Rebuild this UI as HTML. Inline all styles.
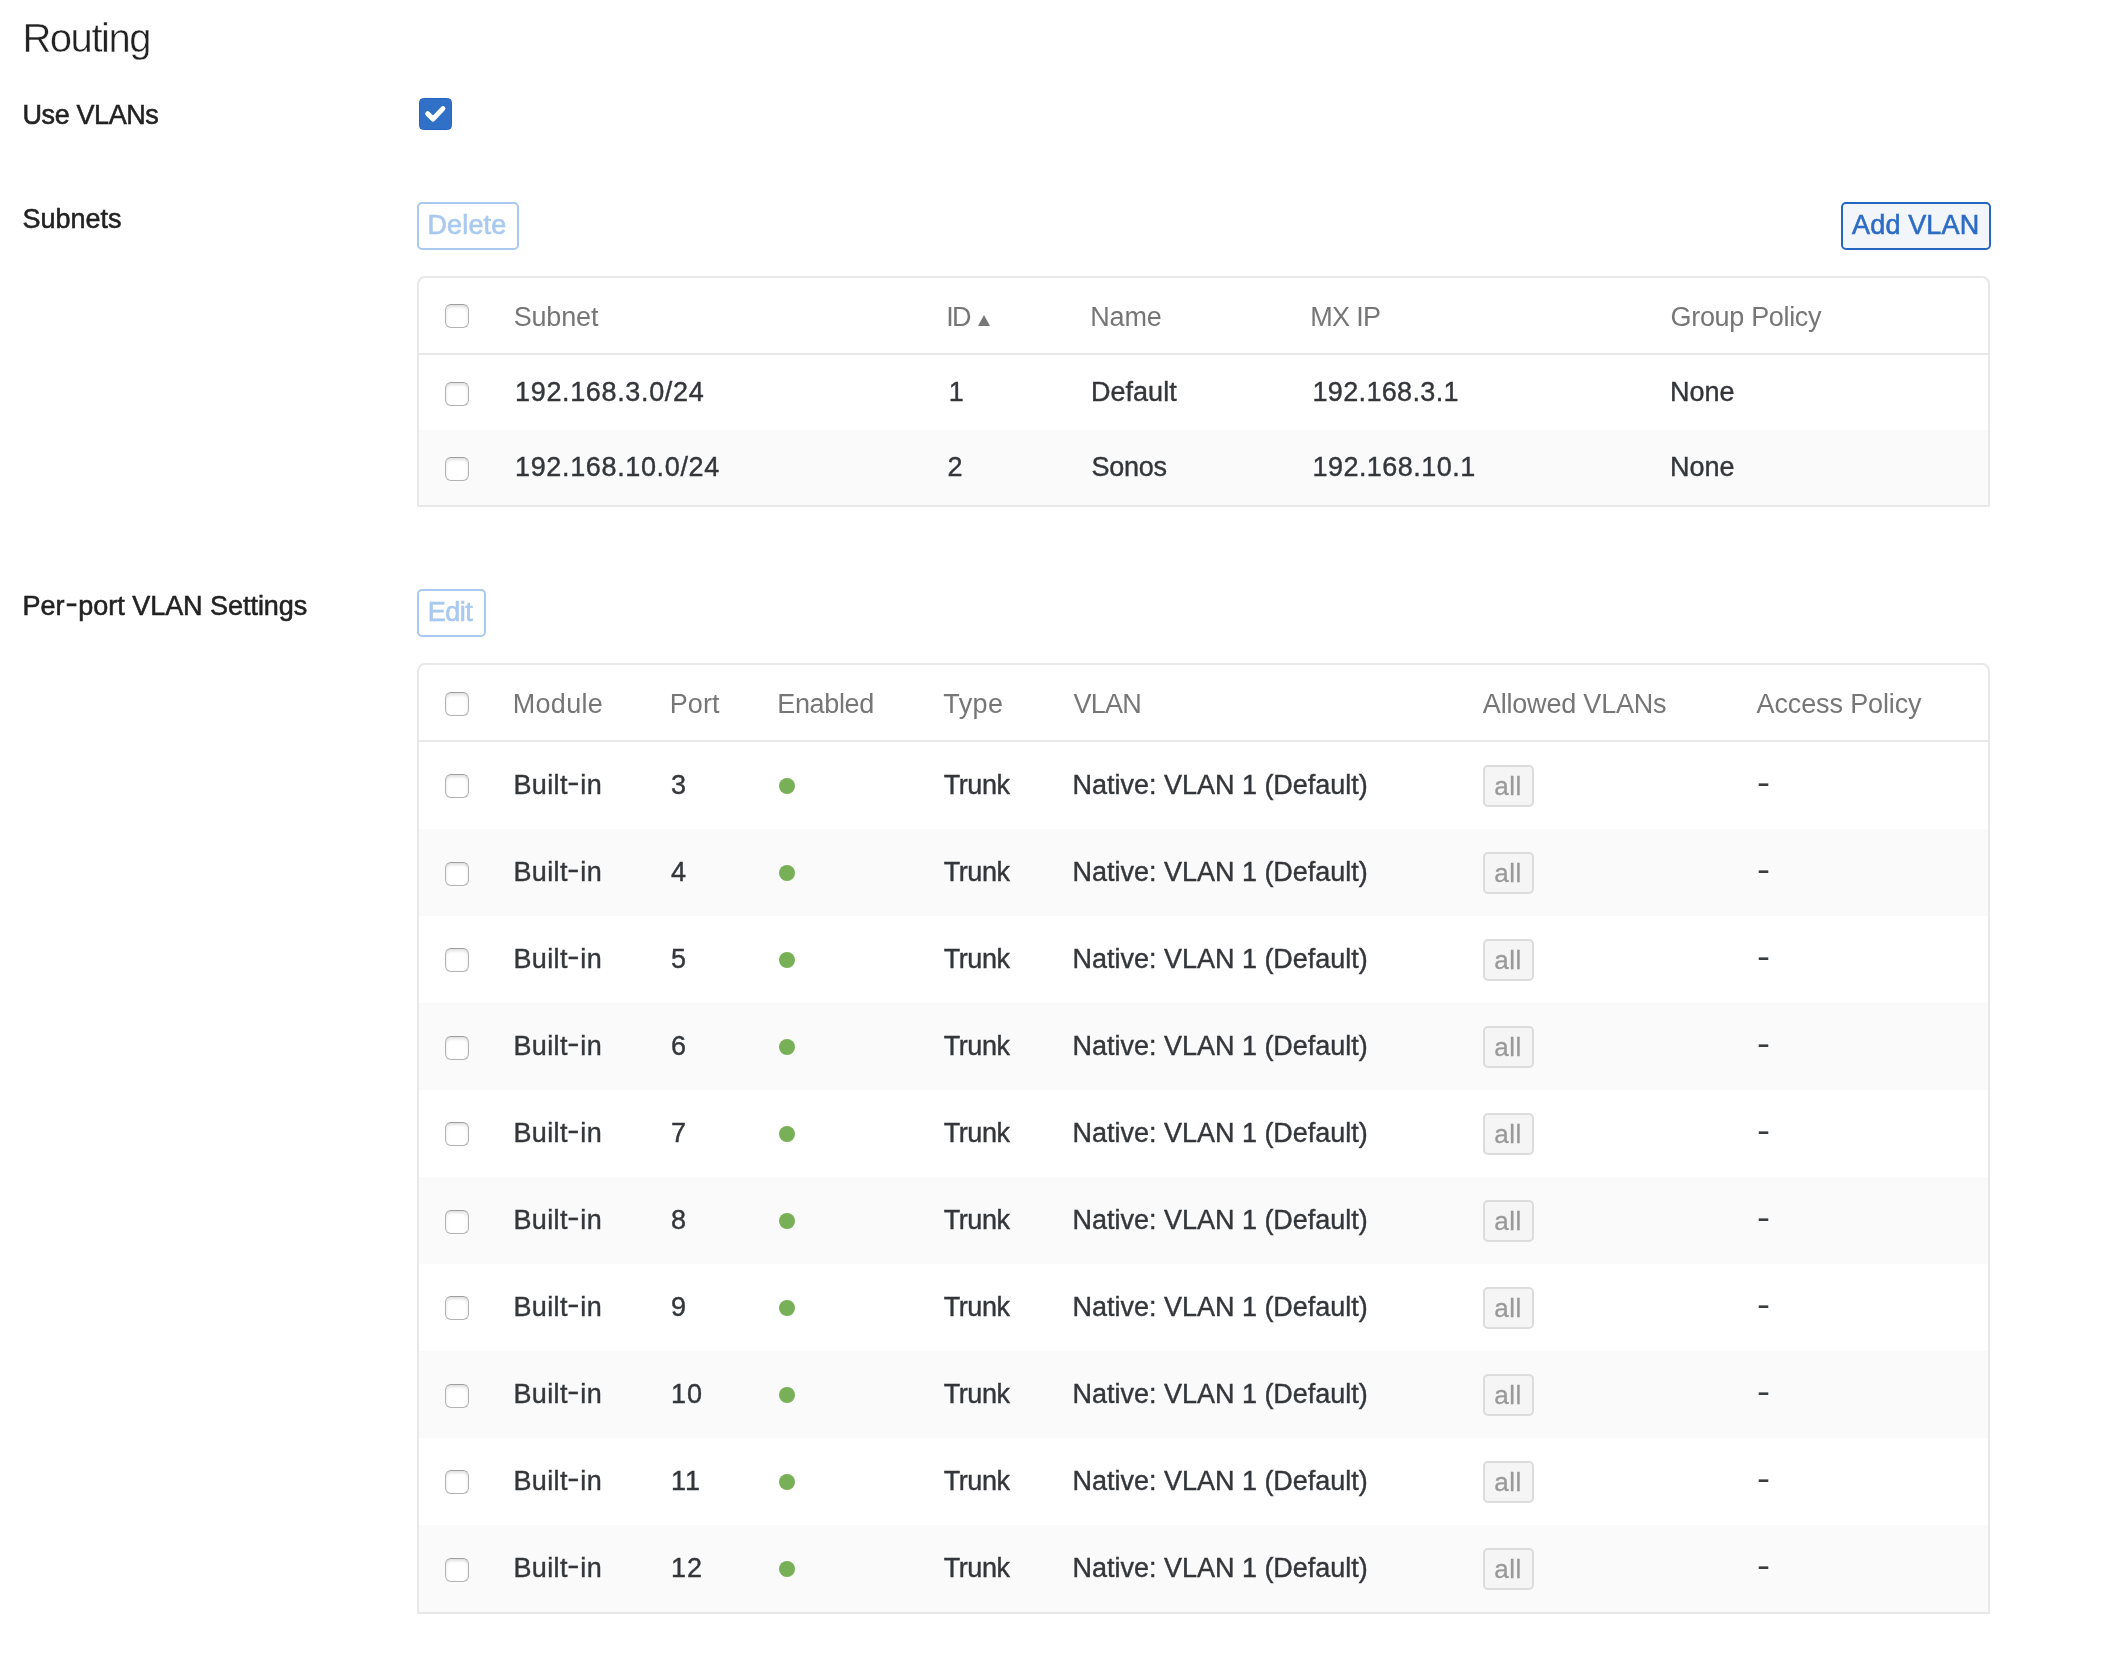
<!DOCTYPE html>
<html lang="en">
<head>
<meta charset="utf-8">
<title>Routing</title>
<style>
*{box-sizing:border-box;margin:0;padding:0}
html,body{width:2120px;height:1660px;background:#fff;overflow:hidden}
body{font-family:"Liberation Sans",Arial,sans-serif;font-size:27px;color:#333;position:relative}
#page{position:absolute;left:0;top:0;width:2120px;height:1660px;will-change:transform;transform:translateZ(0)}
h1{position:absolute;left:22.4px;top:16px;font-size:40px;line-height:44px;font-weight:400;color:#222;letter-spacing:-1.45px;-webkit-text-stroke:0.5px #fff;white-space:nowrap}
.lbl{position:absolute;left:22.5px;font-size:27px;line-height:30px;color:#222;white-space:nowrap;-webkit-text-stroke:0.55px #222}
.cbx{position:absolute;left:419px;top:98px;width:33px;height:32px;border-radius:4.5px;background:#3071c7;border:1px solid #2765c2}
.cbx svg{position:absolute;left:-1px;top:-1px}
.btn{position:absolute;height:48px;border:2px solid #a9c9ee;border-radius:5px;background:#fff;color:#a9c9ee;font-size:27px;line-height:30px;padding:6px 0 0 9px;white-space:nowrap;-webkit-text-stroke:0.65px #a9c9ee}
.btn.pri{border-color:#2566c3;background:#f2f6fb;color:#2d6cc6;-webkit-text-stroke:0.6px #2d6cc6}
.tbl{position:absolute;left:417px;width:1573px;border:2px solid #e8e8e8;border-radius:8px 8px 0 0;overflow:hidden}
table{border-collapse:separate;border-spacing:0;table-layout:fixed;width:1569px}
th,td{text-align:left;font-weight:400;white-space:nowrap;vertical-align:top;overflow:visible}
th{height:77px;line-height:75px;border-bottom:2px solid #e8e8e8;color:#767676}
th .x{position:relative;top:2px}
td{color:#33363a;-webkit-text-stroke:0.4px #33363a}
.t1 td{height:75px;line-height:75px}
.t2 td{height:87px;line-height:87px}
tr.z td{background:#fafafa}
.ck{display:block;width:24px;height:24px;margin-left:26px;border:1px solid #b3b3b3;border-top-color:#9e9e9e;border-radius:6px;background:#fff;box-shadow:inset 0 2px 3px rgba(0,0,0,.13)}
th .ck{margin-top:26px}
.t1 td .ck{margin-top:27px}
.t2 th .ck{margin-top:27px}
.t2 td .ck{margin-top:32px}
.t2 tr.z td .ck{margin-top:33px}
.hy{display:inline-block;transform:translateY(-3px) scaleX(1.35);margin:0 1.5px}
.lbl .hy{margin:0 2.5px}
.dot{display:block;width:16px;height:16px;border-radius:50%;background:#78b057;margin-top:36px}
.tag{display:inline-block;width:51px;height:42px;margin-top:23px;border:2px solid #dcdcdc;border-radius:5px;background:#f5f5f5;color:#999;font-size:26px;line-height:38px;text-align:center;vertical-align:top;-webkit-text-stroke:0.3px #999}
.tri{display:inline-block;width:0;height:0;border-left:6px solid transparent;border-right:6px solid transparent;border-bottom:11px solid #777;margin-left:8px;position:relative;top:1.5px}
.dash{display:inline-block;transform:translateY(-1.6px) scale(1.45,1.2);transform-origin:0 50%;margin-left:0px;-webkit-text-stroke:0;color:#3a3d40}
</style>
</head>
<body>
<div id="page">
<h1>Routing</h1>
<div class="lbl" id="l1" style="top:100px;letter-spacing:-.4px">Use VLANs</div>
<div class="cbx"><svg width="33" height="32" viewBox="419 98 33 32"><polyline points="427.7,113.7 433,119 442.9,108.6" fill="none" stroke="#fff" stroke-width="5" stroke-linecap="round" stroke-linejoin="round"/></svg></div>
<div class="lbl" id="l2" style="top:204px;letter-spacing:0px">Subnets</div>
<div class="btn" id="bdel" style="left:417px;top:202px;width:102px"><span class="x" style="letter-spacing:0.16px;margin-left:-0.58px">Delete</span></div>
<div class="btn pri" id="badd" style="left:1841px;top:202px;width:150px"><span class="x" style="letter-spacing:0.14px;margin-left:0.11px">Add VLAN</span></div>
<div class="tbl t1" style="top:276px">
<table>
<colgroup><col style="width:96px"><col style="width:433px"><col style="width:144px"><col style="width:220px"><col style="width:360px"><col style="width:316px"></colgroup>
<thead><tr><th><i class="ck"></i></th><th><span class="x" style="letter-spacing:-0.14px;margin-left:-1.38px">Subnet</span></th><th><span class="x" style="letter-spacing:-1.74px;margin-left:-1.88px">ID</span><i class="tri"></i></th><th><span class="x" style="letter-spacing:-0.19px;margin-left:-1.75px">Name</span></th><th><span class="x" style="letter-spacing:-0.69px;margin-left:-1.75px">MX IP</span></th><th><span class="x" style="letter-spacing:-0.33px;margin-left:-1.44px">Group Policy</span></th></tr></thead>
<tbody>
<tr><td><i class="ck"></i></td><td><span class="x" style="letter-spacing:0.65px;margin-left:0.06px">192.168.3.0/24</span></td><td><span class="x" style="margin-left:0.85px">1</span></td><td><span class="x" style="letter-spacing:0.05px;margin-left:-1.13px">Default</span></td><td><span class="x" style="letter-spacing:0.34px;margin-left:0.47px">192.168.3.1</span></td><td><span class="x" style="letter-spacing:0.07px;margin-left:-2.13px">None</span></td></tr>
<tr class="z"><td><i class="ck"></i></td><td><span class="x" style="letter-spacing:0.64px;margin-left:0.06px">192.168.10.0/24</span></td><td><span class="x" style="margin-left:-0.42px">2</span></td><td><span class="x" style="letter-spacing:-0.25px;margin-left:-0.56px">Sonos</span></td><td><span class="x" style="letter-spacing:0.46px;margin-left:0.47px">192.168.10.1</span></td><td><span class="x" style="letter-spacing:0.07px;margin-left:-2.13px">None</span></td></tr>
</tbody>
</table>
</div>
<div class="lbl" id="l3" style="top:591px;letter-spacing:-.04px">Per<span class="hy">-</span>port VLAN Settings</div>
<div class="btn" id="bedit" style="left:417px;top:589px;width:69px"><span class="x" style="letter-spacing:-0.48px;margin-left:-0.26px">Edit</span></div>
<div class="tbl t2" style="top:663px">
<table>
<colgroup><col style="width:96px"><col style="width:157px"><col style="width:107px"><col style="width:165px"><col style="width:130px"><col style="width:409px"><col style="width:274px"><col style="width:231px"></colgroup>
<thead><tr><th><i class="ck"></i></th><th><span class="x" style="letter-spacing:0.30px;margin-left:-2.28px">Module</span></th><th><span class="x" style="letter-spacing:0.09px;margin-left:-2.28px">Port</span></th><th><span class="x" style="letter-spacing:-0.34px;margin-left:-1.75px">Enabled</span></th><th><span class="x" style="letter-spacing:0.38px;margin-left:-0.70px">Type</span></th><th><span class="x" style="letter-spacing:-0.75px;margin-left:-0.54px">VLAN</span></th><th><span class="x" style="letter-spacing:-0.19px;margin-left:-0.19px">Allowed VLANs</span></th><th><span class="x" style="letter-spacing:-0.13px;margin-left:-0.40px">Access Policy</span></th></tr></thead>
<tbody>
<tr><td><i class="ck"></i></td><td><span class="x" style="letter-spacing:0.38px;margin-left:-1.56px">Built<span class="hy">-</span>in</span></td><td><span class="x" style="margin-left:-1.11px">3</span></td><td><i class="dot"></i></td><td><span class="x" style="letter-spacing:-0.40px;margin-left:-0.38px">Trunk</span></td><td><span class="x" style="letter-spacing:-0.01px;margin-left:-1.56px">Native: VLAN 1 (Default)</span></td><td><span class="tag"><span class="x" style="letter-spacing:0.53px;margin-left:-0.83px">all</span></span></td><td><span class="dash">-</span></td></tr>
<tr class="z"><td><i class="ck"></i></td><td><span class="x" style="letter-spacing:0.38px;margin-left:-1.56px">Built<span class="hy">-</span>in</span></td><td><span class="x" style="margin-left:-1.11px">4</span></td><td><i class="dot"></i></td><td><span class="x" style="letter-spacing:-0.40px;margin-left:-0.38px">Trunk</span></td><td><span class="x" style="letter-spacing:-0.01px;margin-left:-1.56px">Native: VLAN 1 (Default)</span></td><td><span class="tag"><span class="x" style="letter-spacing:0.53px;margin-left:-0.83px">all</span></span></td><td><span class="dash">-</span></td></tr>
<tr><td><i class="ck"></i></td><td><span class="x" style="letter-spacing:0.38px;margin-left:-1.56px">Built<span class="hy">-</span>in</span></td><td><span class="x" style="margin-left:-1.11px">5</span></td><td><i class="dot"></i></td><td><span class="x" style="letter-spacing:-0.40px;margin-left:-0.38px">Trunk</span></td><td><span class="x" style="letter-spacing:-0.01px;margin-left:-1.56px">Native: VLAN 1 (Default)</span></td><td><span class="tag"><span class="x" style="letter-spacing:0.53px;margin-left:-0.83px">all</span></span></td><td><span class="dash">-</span></td></tr>
<tr class="z"><td><i class="ck"></i></td><td><span class="x" style="letter-spacing:0.38px;margin-left:-1.56px">Built<span class="hy">-</span>in</span></td><td><span class="x" style="margin-left:-1.11px">6</span></td><td><i class="dot"></i></td><td><span class="x" style="letter-spacing:-0.40px;margin-left:-0.38px">Trunk</span></td><td><span class="x" style="letter-spacing:-0.01px;margin-left:-1.56px">Native: VLAN 1 (Default)</span></td><td><span class="tag"><span class="x" style="letter-spacing:0.53px;margin-left:-0.83px">all</span></span></td><td><span class="dash">-</span></td></tr>
<tr><td><i class="ck"></i></td><td><span class="x" style="letter-spacing:0.38px;margin-left:-1.56px">Built<span class="hy">-</span>in</span></td><td><span class="x" style="margin-left:-1.11px">7</span></td><td><i class="dot"></i></td><td><span class="x" style="letter-spacing:-0.40px;margin-left:-0.38px">Trunk</span></td><td><span class="x" style="letter-spacing:-0.01px;margin-left:-1.56px">Native: VLAN 1 (Default)</span></td><td><span class="tag"><span class="x" style="letter-spacing:0.53px;margin-left:-0.83px">all</span></span></td><td><span class="dash">-</span></td></tr>
<tr class="z"><td><i class="ck"></i></td><td><span class="x" style="letter-spacing:0.38px;margin-left:-1.56px">Built<span class="hy">-</span>in</span></td><td><span class="x" style="margin-left:-1.11px">8</span></td><td><i class="dot"></i></td><td><span class="x" style="letter-spacing:-0.40px;margin-left:-0.38px">Trunk</span></td><td><span class="x" style="letter-spacing:-0.01px;margin-left:-1.56px">Native: VLAN 1 (Default)</span></td><td><span class="tag"><span class="x" style="letter-spacing:0.53px;margin-left:-0.83px">all</span></span></td><td><span class="dash">-</span></td></tr>
<tr><td><i class="ck"></i></td><td><span class="x" style="letter-spacing:0.38px;margin-left:-1.56px">Built<span class="hy">-</span>in</span></td><td><span class="x" style="margin-left:-1.11px">9</span></td><td><i class="dot"></i></td><td><span class="x" style="letter-spacing:-0.40px;margin-left:-0.38px">Trunk</span></td><td><span class="x" style="letter-spacing:-0.01px;margin-left:-1.56px">Native: VLAN 1 (Default)</span></td><td><span class="tag"><span class="x" style="letter-spacing:0.53px;margin-left:-0.83px">all</span></span></td><td><span class="dash">-</span></td></tr>
<tr class="z"><td><i class="ck"></i></td><td><span class="x" style="letter-spacing:0.38px;margin-left:-1.56px">Built<span class="hy">-</span>in</span></td><td><span class="x" style="letter-spacing:0.90px;margin-left:-0.94px">10</span></td><td><i class="dot"></i></td><td><span class="x" style="letter-spacing:-0.40px;margin-left:-0.38px">Trunk</span></td><td><span class="x" style="letter-spacing:-0.01px;margin-left:-1.56px">Native: VLAN 1 (Default)</span></td><td><span class="tag"><span class="x" style="letter-spacing:0.53px;margin-left:-0.83px">all</span></span></td><td><span class="dash">-</span></td></tr>
<tr><td><i class="ck"></i></td><td><span class="x" style="letter-spacing:0.38px;margin-left:-1.56px">Built<span class="hy">-</span>in</span></td><td><span class="x" style="letter-spacing:0.90px;margin-left:-0.94px">11</span></td><td><i class="dot"></i></td><td><span class="x" style="letter-spacing:-0.40px;margin-left:-0.38px">Trunk</span></td><td><span class="x" style="letter-spacing:-0.01px;margin-left:-1.56px">Native: VLAN 1 (Default)</span></td><td><span class="tag"><span class="x" style="letter-spacing:0.53px;margin-left:-0.83px">all</span></span></td><td><span class="dash">-</span></td></tr>
<tr class="z"><td><i class="ck"></i></td><td><span class="x" style="letter-spacing:0.38px;margin-left:-1.56px">Built<span class="hy">-</span>in</span></td><td><span class="x" style="letter-spacing:0.90px;margin-left:-0.94px">12</span></td><td><i class="dot"></i></td><td><span class="x" style="letter-spacing:-0.40px;margin-left:-0.38px">Trunk</span></td><td><span class="x" style="letter-spacing:-0.01px;margin-left:-1.56px">Native: VLAN 1 (Default)</span></td><td><span class="tag"><span class="x" style="letter-spacing:0.53px;margin-left:-0.83px">all</span></span></td><td><span class="dash">-</span></td></tr>
</tbody>
</table>
</div>
</div>
</body>
</html>
